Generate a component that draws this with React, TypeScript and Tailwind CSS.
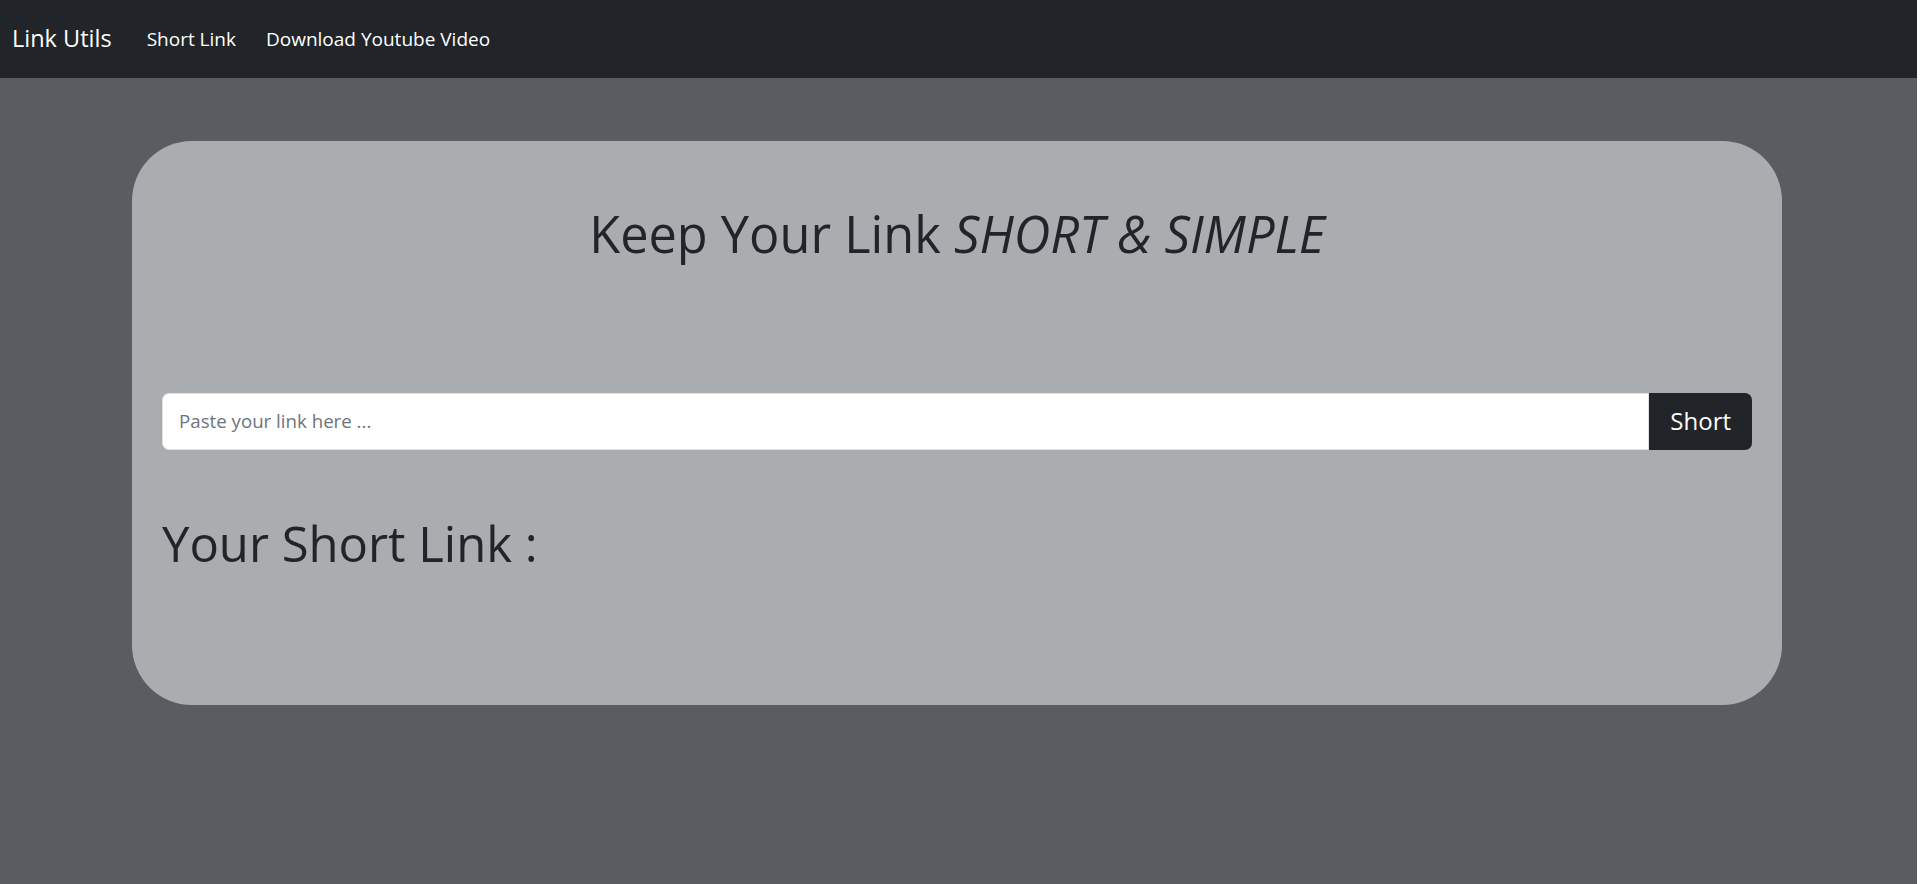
import React from 'react';

const font = { fontFamily: '"Segoe UI", "Open Sans", "Noto Sans", sans-serif' };

function Navbar() {
  return (
    <nav className="h-[78px] bg-[#212529] flex items-center px-[12px]">
      <a href="#" className="text-[23.5px] leading-[1.5] text-white mr-[20px]">
        Link Utils
      </a>
      <ul className="flex items-center">
        <li>
          <a href="#" className="block px-[15px] text-[19px] leading-[1.5] text-white">
            Short Link
          </a>
        </li>
        <li>
          <a href="#" className="block px-[15px] text-[19px] leading-[1.5] text-white">
            Download Youtube Video
          </a>
        </li>
      </ul>
    </nav>
  );
}

export default function App() {
  return (
    <div className="bg-white min-h-[884px]" style={font}>
      <div className="w-[1917px] min-h-[884px] bg-[#595d61]">
        <Navbar />
        <main className="pt-[63px]">
          <div className="w-[1650px] ml-[132px] rounded-[60px] bg-[#aaadb0] px-[30px] pt-[63px] pb-[133px] text-[#212529]">
            <h1 className="text-center text-[50.5px] leading-[1.2] font-medium">
              Keep Your Link <i>SHORT &amp; SIMPLE</i>
            </h1>
            <div className="mt-[128px] flex h-[57px]">
              <input
                type="text"
                placeholder="Paste your link here ..."
                className="flex-1 bg-white border border-[#dee2e6] rounded-l-[7px] px-[16px] text-[18.7px] text-[#212529] placeholder:text-[#6c757d] outline-none"
                style={font}
              />
              <button className="bg-[#212529] text-white text-[24px] px-[21px] rounded-r-[7px]">
                Short
              </button>
            </div>
            <h1 className="mt-[64px] text-[49px] leading-[1.2] font-medium">Your Short Link :</h1>
          </div>
        </main>
      </div>
    </div>
  );
}
